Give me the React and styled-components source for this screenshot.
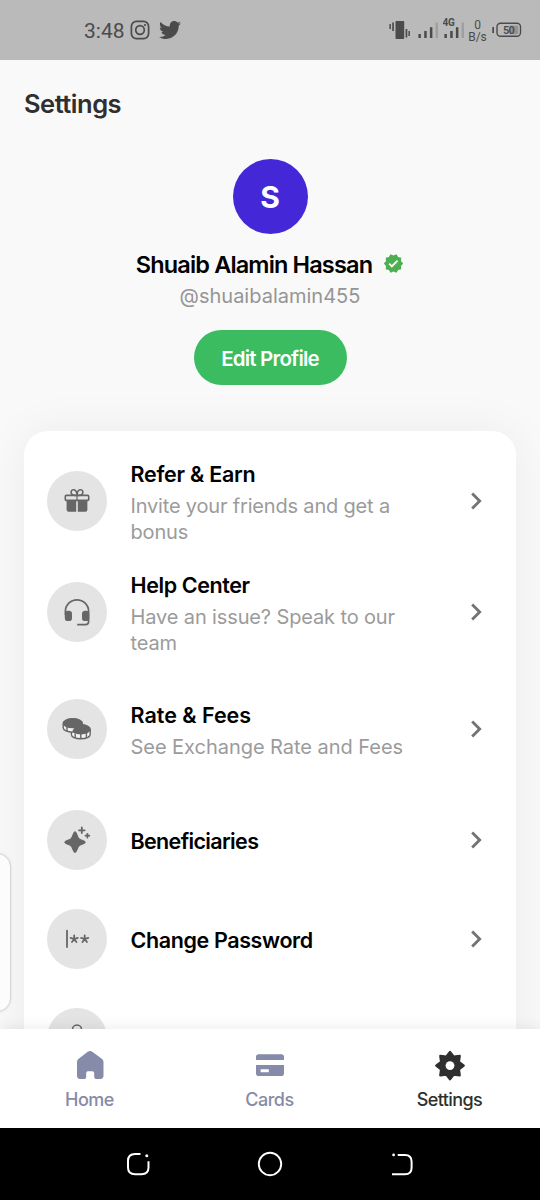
import styled, { createGlobalStyle, css } from 'styled-components';
import { FaTwitter } from 'react-icons/fa';
import { MdChevronRight, MdVerified } from 'react-icons/md';

const theme = {
    font: "'Inter', 'Liberation Sans', sans-serif",
    status: "'Roboto', sans-serif",
    page: '#f9f9f9',
    dark: '#2f2f2f',
    muted: '#9b9b9b',
    green: '#3bbc60',
    purple: '#4428d8',
    icon: '#666666',
    tab: '#858ba8',
};

const GlobalStyle = createGlobalStyle`
    * {
        box-sizing: border-box;
    }
    body {
        margin: 0;
        background: ${theme.page};
        font-family: ${theme.font};
    }
`;

const Screen = styled.div`
    position: relative;
    display: flex;
    flex-direction: column;
    width: 540px;
    height: 1200px;
    overflow: hidden;
    background: ${theme.page};
`;

const StatusBar = styled.header`
    display: flex;
    flex: none;
    justify-content: space-between;
    align-items: center;
    height: 60px;
    padding: 0 18px 0 84px;
    background: #bababa;
    color: #4b4b4b;
    font-family: ${theme.status};
`;
const StatusLeft = styled.div`
    display: flex;
    align-items: center;
`;
const Clock = styled.span`
    width: 46px;
    font-size: 21px;
    line-height: 24px;
    padding-top: 2px;
`;
const StatusIcons = styled.svg`
    display: block;
    flex: none;
`;
const TwitterIcon = styled(FaTwitter)`
    margin-left: 9px;
`;
const StatusRight = styled.div`
    display: flex;
    align-items: center;
`;
const Vibrate = styled(StatusIcons)`
    margin-right: 6px;
`;
const Speed = styled.div`
    width: 22px;
    margin: 1px 2.5px 0 0.5px;
    font-size: 12px;
    line-height: 12px;
    text-align: center;
`;

const Content = styled.main`
    flex: 1;
    min-height: 0;
    overflow: hidden;
    padding: 0 24px;
`;
const PageTitle = styled.h1`
    margin: 28px 0 0;
    font-size: 25.5px;
    line-height: 32px;
    font-weight: 600;
    letter-spacing: -0.5px;
    color: ${theme.dark};
`;

const Profile = styled.section`
    display: flex;
    flex-direction: column;
    align-items: center;
    margin-top: 39px;
`;
const Avatar = styled.div`
    display: flex;
    justify-content: center;
    align-items: center;
    width: 75px;
    height: 75px;
    border-radius: 50%;
    background: ${theme.purple};
    color: #fff;
    font-size: 30px;
    font-weight: 700;
`;
const NameRow = styled.div`
    display: flex;
    align-items: center;
    height: 32px;
    margin-top: 15px;
`;
const Name = styled.h2`
    margin: 0 11px 0 0;
    font-size: 23.5px;
    line-height: 32px;
    font-weight: 600;
    letter-spacing: -0.85px;
    color: #000;
`;
const VerifiedIcon = styled(MdVerified)`
    margin-bottom: 4px;
    color: #4caf50;
`;
const Handle = styled.p`
    margin: 2px 0 0;
    font-size: 20px;
    line-height: 26px;
    font-weight: 400;
    color: #959595;
`;
const EditButton = styled.button`
    width: 153px;
    height: 55px;
    margin-top: 21px;
    padding: 2px 0 0;
    border: none;
    border-radius: 28px;
    background: ${theme.green};
    color: #fff;
    font-family: ${theme.font};
    font-size: 20.5px;
    font-weight: 600;
    letter-spacing: -0.8px;
`;

const Card = styled.section`
    height: 700px;
    margin-top: 46px;
    padding: 14px 23px 0 22.5px;
    border-radius: 24px;
    background: #fff;
    box-shadow: 0 0 48px rgba(0, 0, 0, 0.06);
`;
const Row = styled.div`
    display: flex;
    align-items: center;
    height: ${(props) => props.$height}px;
`;
const Bubble = styled.div`
    display: flex;
    flex: none;
    justify-content: center;
    align-items: center;
    width: 60px;
    height: 60px;
    border-radius: 50%;
    background: #e4e4e4;
    color: ${theme.icon};
`;
const RowText = styled.div`
    flex: 1;
    padding: 1px 0 0 24px;
    ${(props) =>
        props.$single &&
        css`
            padding-top: 3px;
        `}
`;
const RowTitle = styled.h3`
    margin: 0;
    font-size: 21.5px;
    line-height: 32px;
    font-weight: 600;
    letter-spacing: ${(props) => props.$spacing}px;
    color: #000;
`;
const RowDesc = styled.p`
    max-width: 290px;
    margin: 3px 0 0;
    font-size: 20px;
    line-height: 26px;
    font-weight: 400;
    letter-spacing: ${(props) => props.$spacing}px;
    color: ${theme.muted};
`;
const Chevron = styled(MdChevronRight)`
    flex: none;
    color: #737373;
`;

const TabBar = styled.nav`
    position: relative;
    display: grid;
    flex: none;
    grid-template-columns: repeat(3, 1fr);
    height: 99px;
    background: #fff;
    box-shadow: 0 -2px 12px rgba(0, 0, 0, 0.07);
`;
const Tab = styled.div`
    display: flex;
    flex-direction: column;
    align-items: center;
    padding-top: 20px;
    color: ${(props) => (props.$active ? theme.dark : theme.tab)};
`;
const TabLabel = styled.span`
    margin-top: 5px;
    padding-right: 1px;
    font-size: 18px;
    line-height: 24px;
    font-weight: 500;
    letter-spacing: ${(props) => props.$spacing}px;
`;

const SystemBar = styled.footer`
    display: flex;
    flex: none;
    justify-content: center;
    align-items: center;
    gap: 104px;
    height: 72px;
    background: #000;
`;

const EdgeHandle = styled.div`
    position: absolute;
    left: -20px;
    top: 853px;
    width: 31px;
    height: 159px;
    border: 1px solid #d6d6d6;
    border-radius: 14px;
    background: #fcfcfc;
    box-shadow: 0 0 3px rgba(0, 0, 0, 0.1);
`;

const InstagramIcon = () => (
    <StatusIcons width="20" height="20" viewBox="0 0 20 20" fill="none" stroke="currentColor">
        <rect x="1.4" y="1.4" width="17.2" height="17.2" rx="5" strokeWidth="1.7" />
        <circle cx="10" cy="10" r="4.3" strokeWidth="1.7" />
        <circle cx="15" cy="5" r="1.1" fill="currentColor" stroke="none" />
    </StatusIcons>
);

const VibrateIcon = () => (
    <Vibrate width="22" height="20" viewBox="0 0 22 20" fill="currentColor">
        <rect x="6.5" y="1" width="8.7" height="18" rx="0.8" />
        <rect x="0.4" y="4" width="1.5" height="5" />
        <rect x="3.2" y="2.5" width="1.7" height="8.5" />
        <rect x="16.6" y="9" width="1.7" height="8.5" />
        <rect x="19.4" y="11" width="1.5" height="5" />
    </Vibrate>
);

const SignalIcon = ({ label }) => (
    <StatusIcons width={label ? 23 : 26} height="24" viewBox={label ? '0 0 23 24' : '0 0 26 24'} fill="currentColor">
        {label && (
            <text x="-0.4" y="8.3" fontSize="10" fontWeight="700" letterSpacing="-0.3">
                {label}
            </text>
        )}
        <rect x="1.4" y="16" width="2.5" height="4" />
        <rect x="7.2" y="13" width="2.5" height="7" />
        <rect x="12.9" y="9.2" width="2.5" height="10.8" />
        <rect x="18.6" y="4.6" width="2.3" height="15.4" fill="#9e9e9e" />
    </StatusIcons>
);

const BatteryIcon = () => (
    <StatusIcons width="31" height="16" viewBox="0 0 31 16" fill="currentColor">
        <rect x="1.3" y="5" width="1.7" height="6" />
        <rect x="6" y="1.3" width="23.5" height="13" rx="3.5" fill="none" stroke="currentColor" strokeWidth="1.4" />
        <rect x="18.5" y="3.5" width="8.8" height="8.8" rx="1" fill="#939393" />
        <text x="12" y="11.7" fontSize="11" fontWeight="600" letterSpacing="-0.8">
            50
        </text>
    </StatusIcons>
);

const GiftIcon = () => (
    <svg width="26" height="26" viewBox="0 0 26 26" fill="none" stroke="currentColor">
        <path d="M13 7.4C8.6 7.7 6.9 6.2 7.1 4C7.4 0.8 12.8 0.3 13 7.4C13.2 0.3 18.6 0.8 18.9 4C19.1 6.2 17.4 7.7 13 7.4Z" strokeWidth="1.6" />
        <rect x="1.3" y="7.4" width="23.4" height="5" rx="1" strokeWidth="1.6" />
        <path d="M13 7V13" strokeWidth="1.2" />
        <path d="M2.6 12.3H12.2V23.8H4.6A2 2 0 0 1 2.6 21.8ZM13.8 12.3H23.4V21.8A2 2 0 0 1 21.4 23.8H13.8Z" fill="currentColor" stroke="none" />
    </svg>
);

const HeadsetIcon = () => (
    <svg width="28" height="28" viewBox="0 0 28 28" fill="none" stroke="currentColor" strokeWidth="1.7">
        <path d="M2.4 17V13.4A11.6 11.6 0 0 1 25.6 13.4V23.5A3.2 3.2 0 0 1 22.4 26.7H14.2" />
        <rect x="1.8" y="12.7" width="7.2" height="10.4" rx="3.2" fill="currentColor" stroke="none" />
        <rect x="19" y="12.7" width="7.2" height="10.4" rx="3.2" fill="currentColor" stroke="none" />
    </svg>
);

const CoinsIcon = () => (
    <svg width="30" height="24" viewBox="0 0 30 24" fill="none" stroke="currentColor" strokeWidth="1.4">
        <path d="M9.4 13V17.4C9.4 20 13.4 21.8 18.7 21.8S28.2 20 28.2 17.4V12.6Z" fill="#f2f2f2" />
        <ellipse cx="18.8" cy="12.2" rx="9.4" ry="4.5" fill="currentColor" />
        <path d="M13.2 16.5V21M18.8 16.5V21.6M24.4 16V21" strokeWidth="1.4" />
        <path d="M1.2 6.4V10.8C1.2 13.4 5.4 15.2 10.7 15.2L16 13L20.4 9V6.4Z" fill="#f2f2f2" stroke="none" />
        <path d="M1.2 6.4V10.8C1.2 13.4 5.4 15.2 10.7 15.2" />
        <path d="M10.4 15.6C10.2 12.8 12.6 10.6 15 9.6L21 6.4V10L18 14Z" fill="currentColor" stroke="none" />
        <ellipse cx="10.8" cy="6.2" rx="9.6" ry="4.4" fill="currentColor" />
        <path d="M5 10V14.2" />
    </svg>
);

const SparkleIcon = () => (
    <svg width="30" height="28" viewBox="0 0 30 28" fill="none" stroke="currentColor" strokeLinecap="round" strokeLinejoin="round">
        <path d="M13 5.8C14.5 5.8 15.3 11.2 16.9 12.7C18.5 14.2 23.2 14.7 23.2 16.2C23.2 17.7 18.6 18.3 17 19.8C15.4 21.3 14.5 26.5 13 26.5C11.5 26.5 10.6 21.3 9 19.8C7.4 18.3 2.8 17.7 2.8 16.2C2.8 14.7 7.5 14.2 9.1 12.7C10.7 11.2 11.5 5.8 13 5.8Z" fill="currentColor" strokeWidth="1.1" />
        <path d="M19.8 1.5V7.1M17 4.3H22.6M25.4 7.8V11.6M23.5 9.7H27.3" strokeWidth="1.8" />
    </svg>
);

const PasswordIcon = () => (
    <svg width="28" height="22" viewBox="0 0 28 22" fill="none" stroke="currentColor" strokeLinecap="round">
        <path d="M4 2.6V19" strokeWidth="1.8" />
        <path d="M11.2 11V7.4M11.2 11L7.6 9.8M11.2 11L14.8 9.8M11.2 11L9 14.1M11.2 11L13.4 14.1" strokeWidth="1.8" />
        <path d="M21.7 11V7.4M21.7 11L18.1 9.8M21.7 11L25.3 9.8M21.7 11L19.5 14.1M21.7 11L23.9 14.1" strokeWidth="1.8" />
    </svg>
);

const LockIcon = () => (
    <svg width="26" height="28" viewBox="0 0 26 28" fill="none" stroke="currentColor" strokeWidth="1.6">
        <path d="M8.5 11V5.5A4.5 4.5 0 0 1 17.5 5.5V11" />
        <rect x="4" y="11" width="18" height="14" rx="3" fill="currentColor" />
    </svg>
);

const HomeIcon = () => (
    <svg width="32" height="34" viewBox="0 0 32 34" fill="currentColor">
        <path d="M13.7 2.8Q16 1 18.3 2.8L28.1 10.1Q29.5 11.2 29.5 13V26.5Q29.5 30 26 30H23Q20.2 30 20.2 27.4V24Q20.2 22.2 18.4 22.2H13.9Q12.2 22.2 12.2 24V27.4Q12.2 30 9.4 30H6.3Q3 30 3 26.5V13Q3 11.2 4.4 10.1Z" />
    </svg>
);

const CardIcon = () => (
    <svg width="32" height="34" viewBox="0 0 32 34" fill="currentColor">
        <path d="M2 11V8Q2 5.3 4.7 5.3H27.3Q30 5.3 30 8V11Z" />
        <path fillRule="evenodd" d="M2 16H30V24.2Q30 27 27.2 27H4.8Q2 27 2 24.2ZM6.6 20.3V23.3H14.8V20.3Z" />
    </svg>
);

const GearIcon = () => {
    const points = Array.from({ length: 16 }, (_, i) => {
        const radius = i % 2 ? 9.7 : 13.8;
        const angle = (i * Math.PI) / 8;
        return `${16 + radius * Math.cos(angle)},${16.6 + radius * Math.sin(angle)}`;
    });
    return (
        <svg width="32" height="34" viewBox="0 0 32 34">
            <polygon points={points.join(' ')} fill="currentColor" stroke="currentColor" strokeWidth="2.2" strokeLinejoin="round" />
            <circle cx="16" cy="16.6" r="4.4" fill="#fff" />
        </svg>
    );
};

const items = [
    { title: 'Refer & Earn', desc: 'Invite your friends and get a bonus', icon: GiftIcon, height: 111, spacing: -0.25, descSpacing: -0.18 },
    { title: 'Help Center', desc: 'Have an issue? Speak to our team', icon: HeadsetIcon, height: 111, spacing: -0.4, descSpacing: -0.13 },
    { title: 'Rate & Fees', desc: 'See Exchange Rate and Fees', icon: CoinsIcon, height: 123, spacing: 0, descSpacing: -0.04 },
    { title: 'Beneficiaries', icon: SparkleIcon, height: 99, spacing: -0.65 },
    { title: 'Change Password', icon: PasswordIcon, height: 99, spacing: -0.38 },
    { title: '', icon: LockIcon, height: 99 },
];

const tabs = [
    { label: 'Home', icon: HomeIcon, spacing: -0.5 },
    { label: 'Cards', icon: CardIcon, spacing: -0.5 },
    { label: 'Settings', icon: GearIcon, spacing: -0.6, active: true },
];

const SettingsRow = ({ item }) => {
    const Icon = item.icon;
    return (
        <Row $height={item.height}>
            <Bubble>
                <Icon />
            </Bubble>
            <RowText $single={!item.desc}>
                <RowTitle $spacing={item.spacing}>{item.title}</RowTitle>
                {item.desc ? <RowDesc $spacing={item.descSpacing}>{item.desc}</RowDesc> : null}
            </RowText>
            {item.title ? <Chevron size={34} /> : null}
        </Row>
    );
};

export default function App() {
    return (
        <Screen>
            <GlobalStyle />
            <StatusBar>
                <StatusLeft>
                    <Clock>3:48</Clock>
                    <InstagramIcon />
                    <TwitterIcon size={22} />
                </StatusLeft>
                <StatusRight>
                    <VibrateIcon />
                    <SignalIcon />
                    <SignalIcon label="4G" />
                    <Speed>
                        0<br />
                        B/s
                    </Speed>
                    <BatteryIcon />
                </StatusRight>
            </StatusBar>
            <Content>
                <PageTitle>Settings</PageTitle>
                <Profile>
                    <Avatar>S</Avatar>
                    <NameRow>
                        <Name>Shuaib Alamin Hassan</Name>
                        <VerifiedIcon size={21} />
                    </NameRow>
                    <Handle>@shuaibalamin455</Handle>
                    <EditButton>Edit Profile</EditButton>
                </Profile>
                <Card>
                    {items.map((item) => (
                        <SettingsRow item={item} key={item.title} />
                    ))}
                </Card>
            </Content>
            <TabBar>
                {tabs.map(({ label, icon: Icon, active, spacing }) => (
                    <Tab $active={active} key={label}>
                        <Icon />
                        <TabLabel $spacing={spacing}>{label}</TabLabel>
                    </Tab>
                ))}
            </TabBar>
            <SystemBar>
                <svg width="28" height="28" viewBox="0 0 28 28" fill="none" stroke="#fff" strokeWidth="2">
                    <path d="M16.5 4H11Q4 4 4 11V17.5Q4 24.2 11 24.2H17.5Q24.5 24.2 24.5 17.5V11.2" />
                    <circle cx="22.8" cy="5.8" r="1.5" fill="#fff" stroke="none" />
                </svg>
                <svg width="28" height="28" viewBox="0 0 28 28" fill="none" stroke="#fff" strokeWidth="1.9">
                    <circle cx="14" cy="14" r="11.2" />
                </svg>
                <svg width="28" height="28" viewBox="0 0 28 28" fill="none" stroke="#fff" strokeWidth="2">
                    <path d="M9.7 4.9H17Q23.6 4.9 23.6 11.5V17.7Q23.6 24.2 17 24.2H4" />
                    <circle cx="5.6" cy="4.9" r="1.4" fill="#fff" stroke="none" />
                </svg>
            </SystemBar>
            <EdgeHandle />
        </Screen>
    );
}
